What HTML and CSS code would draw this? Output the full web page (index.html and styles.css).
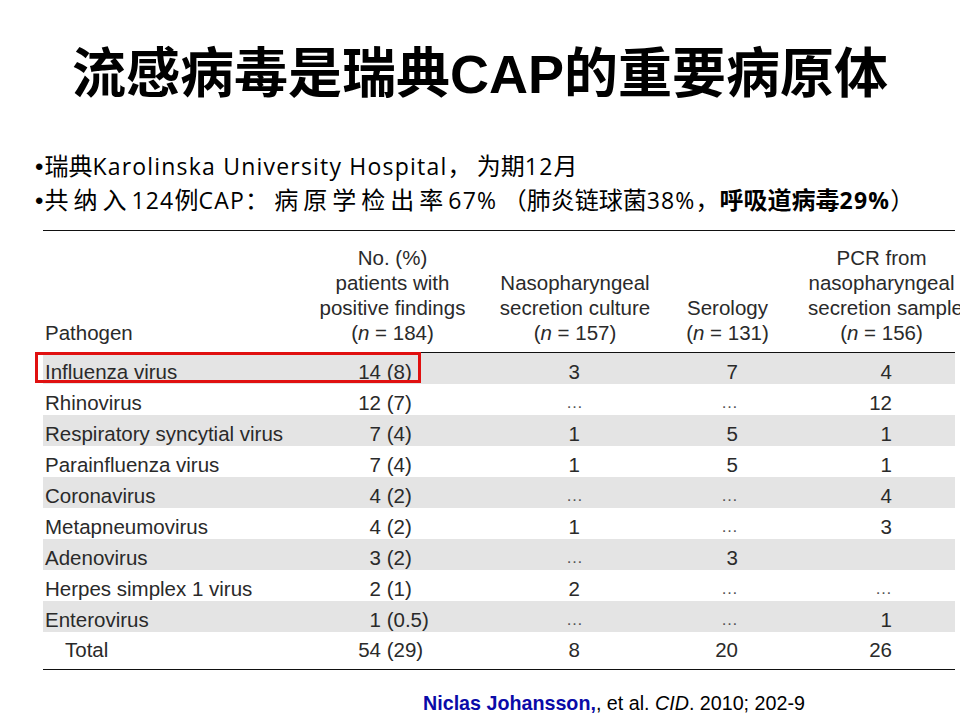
FILE: index.html
```html
<!DOCTYPE html>
<html lang="zh">
<head>
<meta charset="utf-8">
<title>流感病毒是瑞典CAP的重要病原体</title>
<link rel="stylesheet" href="styles.css">
</head>
<body>
<h1 class="title">流感病毒是瑞典CAP的重要病原体</h1>
<div class="bullets">
  <p class="line"><span class="dot">•</span><span class="cj">瑞典</span>Karolinska University Hospital<span class="cj">，&nbsp;为期</span>12<span class="cj">月</span></p>
  <p class="line"><span class="dot">•</span><span class="cj sp1">共纳入</span>124<span class="cj">例</span>CAP<span class="cj">：&nbsp;</span><span class="cj sp2">病原学检出率</span>67%<span class="cj">&nbsp;（肺炎链球菌</span>38%<span class="cj">，</span><b class="hl"><span class="cj">呼吸道病毒</span>29%</b><span class="cj">）</span></p>
</div>
<table class="tbl">
  <colgroup>
    <col class="c1"><col class="c2"><col class="c3"><col class="c4"><col class="c5">
  </colgroup>
  <thead>
    <tr>
      <th class="h1">Pathogen</th>
      <th class="h2">No. (%)<br>patients with<br>positive findings<br>(<i>n</i> = 184)</th>
      <th class="h3">Nasopharyngeal<br>secretion culture<br>(<i>n</i> = 157)</th>
      <th class="h4">Serology<br>(<i>n</i> = 131)</th>
      <th class="h5">PCR from<br>nasopharyngeal<br>secretion sample<br>(<i>n</i> = 156)</th>
    </tr>
  </thead>
  <tbody>
    <tr class="g"><td class="name mark-cell"><div class="mark"></div>Influenza virus</td><td class="num"><span class="n">14</span> (8)</td><td class="v3">3</td><td class="v4">7</td><td class="v5">4</td></tr>
    <tr><td class="name">Rhinovirus</td><td class="num"><span class="n">12</span> (7)</td><td class="v3 el">…</td><td class="v4 el">…</td><td class="v5">12</td></tr>
    <tr class="g"><td class="name">Respiratory syncytial virus</td><td class="num"><span class="n">7</span> (4)</td><td class="v3">1</td><td class="v4">5</td><td class="v5">1</td></tr>
    <tr><td class="name">Parainfluenza virus</td><td class="num"><span class="n">7</span> (4)</td><td class="v3">1</td><td class="v4">5</td><td class="v5">1</td></tr>
    <tr class="g"><td class="name">Coronavirus</td><td class="num"><span class="n">4</span> (2)</td><td class="v3 el">…</td><td class="v4 el">…</td><td class="v5">4</td></tr>
    <tr><td class="name">Metapneumovirus</td><td class="num"><span class="n">4</span> (2)</td><td class="v3">1</td><td class="v4 el">…</td><td class="v5">3</td></tr>
    <tr class="g"><td class="name">Adenovirus</td><td class="num"><span class="n">3</span> (2)</td><td class="v3 el">…</td><td class="v4">3</td><td class="v5"></td></tr>
    <tr><td class="name">Herpes simplex 1 virus</td><td class="num"><span class="n">2</span> (1)</td><td class="v3">2</td><td class="v4 el">…</td><td class="v5 el">…</td></tr>
    <tr class="g"><td class="name">Enterovirus</td><td class="num"><span class="n">1</span> (0.5)</td><td class="v3 el">…</td><td class="v4 el">…</td><td class="v5">1</td></tr>
    <tr class="total"><td class="name">Total</td><td class="num"><span class="n">54</span> (29)</td><td class="v3">8</td><td class="v4">20</td><td class="v5">26</td></tr>
  </tbody>
</table>
<p class="ref"><b class="author">Niclas Johansson,</b>, et al. <i>CID</i>. 2010; 202-9</p>
</body>
</html>
```
FILE: styles.css
```css
html, body {
  margin: 0;
  padding: 0;
  background: #fff;
  overflow: hidden;
}
body {
  width: 960px;
  height: 720px;
  color: #000;
  font-family: "Liberation Sans", "Noto Sans CJK SC", sans-serif;
}
.title {
  margin: 0;
  padding-top: 48px;
  height: 52px;
  font-size: 54px;
  line-height: 52px;
  font-weight: 700;
  text-align: center;
  white-space: nowrap;
  font-family: "Liberation Sans", "Noto Sans CJK SC", sans-serif;
}
.bullets {
  margin-top: 48px;
  padding-left: 35px;
  font-family: "Open Sans", "Noto Sans CJK SC", sans-serif;
  font-size: 23px;
  letter-spacing: 1.2px;
  line-height: 34px;
}
.line {
  margin: 0;
  height: 34px;
  overflow: visible;
  white-space: nowrap;
}
.dot {
  font-family: "Liberation Sans", sans-serif;
  font-size: 24px;
  letter-spacing: 0;
  margin-right: 1px;
}
.cj {
  font-family: "Noto Sans CJK SC", sans-serif;
  font-size: 24px;
  font-weight: 400;
  letter-spacing: 0;
}
.sp1 { letter-spacing: 5px; }
.sp2 { letter-spacing: 5px; }
.hl { font-weight: 700; }
.hl .cj { font-weight: 700; }

.tbl {
  margin-top: 14px;
  margin-left: 43px;
  width: 912px;
  table-layout: fixed;
  border-collapse: collapse;
  font-family: "Liberation Sans", sans-serif;
  font-size: 20.5px;
  color: #2a2a2a;
  border-top: 1px solid #111;
  border-bottom: 1px solid #111;
}
.c1 { width: 267px; }
.c2 { width: 165px; }
.c3 { width: 200px; }
.c4 { width: 105px; }
.c5 { width: 175px; }
.tbl th {
  font-weight: 400;
  line-height: 25px;
  padding: 14px 0 7px 0;
  vertical-align: bottom;
  text-align: center;
  white-space: nowrap;
  border-bottom: 1px solid #111;
}
.tbl th.h1 { text-align: left; padding-left: 2px; }
.tbl th.h5 { padding-left: 28px; }
.tbl i { font-style: italic; }
.tbl td {
  height: 31px;
  box-sizing: border-box;
  padding: 6px 0 0 0;
  line-height: 25px;
  vertical-align: top;
  white-space: nowrap;
}
.tbl tr.g td { background: #e4e4e4; }
.tbl td.name { padding-left: 2px; }
.tbl tr.total td { height: 37px; padding-top: 5px; }
.tbl tr.total td.name { padding-left: 22px; }
.tbl td.num { padding-left: 30px; }
.tbl td.num .n { display: inline-block; width: 41px; text-align: right; }
.tbl td.v3 { text-align: right; padding-right: 95px; }
.tbl td.v4 { text-align: right; padding-right: 42px; }
.tbl td.v5 { text-align: right; padding-right: 63px; }
.tbl td.el { color: #555; font-size: 17px; }
.tbl td.v3.el { padding-right: 92px; }
.mark-cell { position: relative; }
.mark {
  position: absolute;
  left: -8px;
  top: -1px;
  width: 386px;
  height: 31px;
  box-sizing: border-box;
  border: 3px solid #e01010;
}
.ref {
  margin: 22px 0 0 423px;
  font-family: "Liberation Sans", sans-serif;
  font-size: 19.7px;
  line-height: 22px;
  white-space: nowrap;
}
.author { color: #0a0aa8; font-weight: 700; }
```
